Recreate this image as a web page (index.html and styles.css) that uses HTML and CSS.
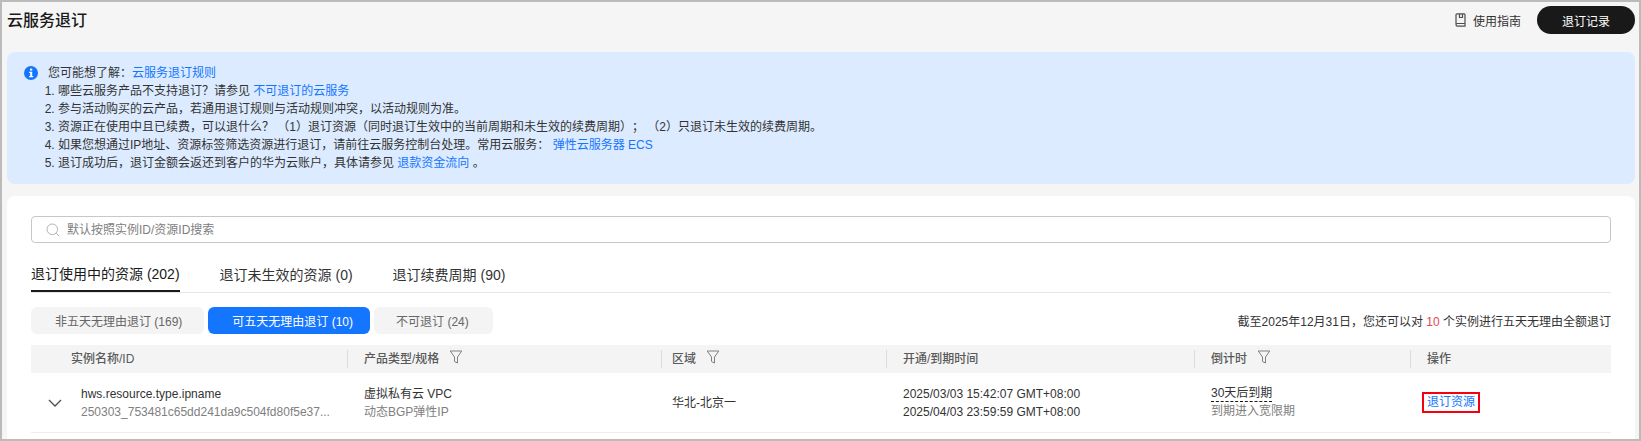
FILE: index.html
```html
<!DOCTYPE html>
<html lang="zh">
<head>
<meta charset="utf-8">
<title>云服务退订</title>
<link rel="stylesheet" href="styles.css">
</head>
<body>
<div class="frame">
  <main class="main">
    <header class="top">
      <h1 class="title">云服务退订</h1>
      <div class="top-actions">
        <span class="guide">
          <svg class="guide-icon" width="11" height="14" viewBox="0 0 11 14" fill="none" stroke="#4d4d4d" stroke-width="1.2"><path d="M1 11V2a1.2 1.2 0 0 1 1.2-1.2h6.9A1 1 0 0 1 10 1.8v11.4H2.4A1.4 1.4 0 0 1 1 11.800a1.300 1.300 0 0 1 1.400-1.300H10"/><path d="M4.500 1v3.500h3V1"/></svg>
          使用指南
        </span>
        <button class="record-btn">退订记录</button>
      </div>
    </header>

    <section class="alert">
      <div class="alert-head">
        <svg class="alert-icon" width="14" height="14" viewBox="0 0 14 14"><circle cx="7" cy="7" r="7" fill="#1476ff"/><rect x="6" y="2.600" width="2.200" height="2" fill="#fff"/><path d="M5.200 5.700h3v4.200h1v1.300H5.200V9.900h1V7H5.200z" fill="#fff"/></svg>
        <span>您可能想了解：<a class="link">云服务退订规则</a></span>
      </div>
      <ol class="alert-list">
        <li>哪些云服务产品不支持退订？请参见 <a class="link">不可退订的云服务</a></li>
        <li>参与活动购买的云产品，若通用退订规则与活动规则冲突，以活动规则为准。</li>
        <li>资源正在使用中且已续费，可以退什么？ （1）退订资源（同时退订生效中的当前周期和未生效的续费周期）； （2）只退订未生效的续费周期。</li>
        <li>如果您想通过IP地址、资源标签筛选资源进行退订，请前往云服务控制台处理。常用云服务： <a class="link">弹性云服务器 ECS</a></li>
        <li>退订成功后，退订金额会返还到客户的华为云账户，具体请参见 <a class="link">退款资金流向</a> 。</li>
      </ol>
    </section>

    <section class="card">
      <div class="search">
        <svg width="14" height="14" viewBox="0 0 14 14" fill="none" stroke="#b3b3b3" stroke-width="1"><circle cx="6.300" cy="6.300" r="5.300"/><path d="M10.200 10.200l3 3"/></svg>
        <span class="search-text">默认按照实例ID/资源ID搜索</span>
      </div>

      <nav class="tabs">
        <span class="tab tab-active">退订使用中的资源 (202)</span>
        <span class="tab">退订未生效的资源 (0)</span>
        <span class="tab">退订续费周期 (90)</span>
      </nav>

      <div class="filter-row">
        <div class="pills">
          <span class="pill pill-one">非五天无理由退订 (169)</span>
          <span class="pill pill-active">可五天无理由退订 (10)</span>
          <span class="pill pill-three">不可退订 (24)</span>
        </div>
        <div class="quota">截至2025年12月31日，您还可以对 <em class="quota-num">10</em> 个实例进行五天无理由全额退订</div>
      </div>

      <div class="table">
        <div class="thead">
          <div class="th th-first">实例名称/ID</div>
          <div class="th">产品类型/规格
            <svg class="funnel" width="14" height="14" viewBox="0 0 13 14" fill="none" stroke="#808080"><path d="M.7 1h11.600L8 7v6l-3-1.500V7z"/></svg>
          </div>
          <div class="th th-region">区域
            <svg class="funnel" width="14" height="14" viewBox="0 0 13 14" fill="none" stroke="#808080"><path d="M.7 1h11.600L8 7v6l-3-1.500V7z"/></svg>
          </div>
          <div class="th">开通/到期时间</div>
          <div class="th">倒计时
            <svg class="funnel" width="14" height="14" viewBox="0 0 13 14" fill="none" stroke="#808080"><path d="M.7 1h11.600L8 7v6l-3-1.500V7z"/></svg>
          </div>
          <div class="th">操作</div>
        </div>
        <div class="tr">
          <div class="td td-first">
            <svg class="chevron" width="14" height="8" viewBox="0 0 14 8" fill="none" stroke="#4d4d4d" stroke-width="1.300"><path d="M1 1l6 6 6-6"/></svg>
            <div class="stack">
              <span>hws.resource.type.ipname</span>
              <span class="muted clip">250303_753481c65dd241da9c504fd80f5e37...</span>
            </div>
          </div>
          <div class="td stack">
            <span>虚拟私有云 VPC</span>
            <span class="muted">动态BGP弹性IP</span>
          </div>
          <div class="td td-region">华北-北京一</div>
          <div class="td stack">
            <span>2025/03/03 15:42:07 GMT+08:00</span>
            <span>2025/04/03 23:59:59 GMT+08:00</span>
          </div>
          <div class="td stack">
            <span class="dashed">30天后到期</span>
            <span class="muted">到期进入宽限期</span>
          </div>
          <div class="td"><a class="link action">退订资源</a></div>
        </div>
      </div>
    </section>
  </main>
</div>
</body>
</html>
```

FILE: styles.css
```css
* { box-sizing: border-box; }
html, body { margin: 0; padding: 0; }
body {
  width: 1641px;
  height: 441px;
  overflow: hidden;
  font-family: "Liberation Sans", "Noto Sans CJK SC", sans-serif;
  font-size: 12px;
  color: #191919;
  text-spacing-trim: space-all;
}
.frame {
  width: 1641px;
  height: 441px;
  border: 2px solid #bbbbbb;
  background: #f5f5f5;
  overflow: hidden;
}
.main { padding: 0 4px 0 5px; }

.top {
  display: flex;
  justify-content: space-between;
  align-items: flex-start;
  height: 50px;
}
.title {
  margin: 8px 0 0;
  font-size: 16px;
  line-height: 22px;
  font-weight: 500;
  color: #191919;
}
.top-actions { display: flex; align-items: center; margin-top: 4px; }
.guide { display: flex; align-items: center; gap: 7px; color: #333; margin-right: 16px; }
.record-btn {
  width: 98px;
  height: 28px;
  border: 0;
  border-radius: 14px;
  background: #191919;
  color: #fff;
  font: inherit;
}

.alert {
  height: 132px;
  padding: 12px 0 0 17px;
  border-radius: 8px;
  background: #dcebff;
  line-height: 18px;
  color: #333;
}
.alert-head { display: flex; align-items: center; gap: 10px; }
.alert-list { margin: 0; padding: 0 0 0 34px; }
.link { color: #1476ff; }

.card {
  margin-top: 12px;
  height: 260px;
  padding: 20px 24px 0;
  border-radius: 8px 8px 0 0;
  background: #fff;
}
.search {
  display: flex;
  align-items: center;
  gap: 7px;
  height: 27px;
  padding-left: 14px;
  border: 1px solid #c7c7c7;
  border-radius: 4px;
  color: #808080;
}
.search-text { padding-bottom: 2px; }

.tabs {
  display: flex;
  gap: 40px;
  height: 50px;
  border-bottom: 1px solid #e6e6e6;
}
.tab {
  display: flex;
  align-items: center;
  padding-top: 13px;
  height: 49px;
  font-size: 14px;
  color: #333;
}
.tab-active { color: #191919; border-bottom: 2px solid #191919; }

.filter-row {
  display: flex;
  justify-content: space-between;
  align-items: center;
  margin-top: 14px;
}
.pills { display: flex; gap: 4px; }
.pill {
  display: flex;
  align-items: center;
  height: 27px;
  border-radius: 6px;
  background: #f4f4f4;
  color: #666;
}
.pill-one { padding: 0 22px 0 24px; }
.pill-active { padding: 0 17px 0 24px; background: #1476ff; color: #fff; }
.pill-three { padding: 0 24px 0 22px; }
.quota { color: #333; }
.quota-num { font-style: normal; color: #e0474f; }

.table { margin-top: 11px; }
.thead, .tr {
  display: grid;
  grid-template-columns: 316px 314px 225px 308px 216px 1fr;
}
.thead { height: 28px; background: #f4f4f4; align-items: center; }
.th {
  display: flex;
  align-items: center;
  gap: 10px;
  height: 18px;
  padding: 0 0 4px 16px;
  border-left: 1px solid #dcdcdc;
  font-weight: 500;
  color: #595959;
}
.th-first { border-left: 0; padding-left: 40px; }
.th-region { padding-left: 10px; }
.funnel { flex: none; }

.tr { height: 60px; border-bottom: 1px solid #eeeeee; align-items: center; }
.td { padding-left: 17px; line-height: 18px; color: #333; }
.td-region { padding-left: 11px; }
.td-first { display: flex; align-items: center; gap: 19px; }
.chevron { flex: none; }
.stack { display: flex; flex-direction: column; align-items: flex-start; }
.muted { color: #808080; }
.clip { white-space: nowrap; }
.dashed { border-bottom: 1px dashed #191919; line-height: 16px; }
.action {
  display: inline-block;
  margin-left: -5px;
  padding: 0 3px;
  line-height: 17px;
  border: 2px solid #f5000f;
}
```
